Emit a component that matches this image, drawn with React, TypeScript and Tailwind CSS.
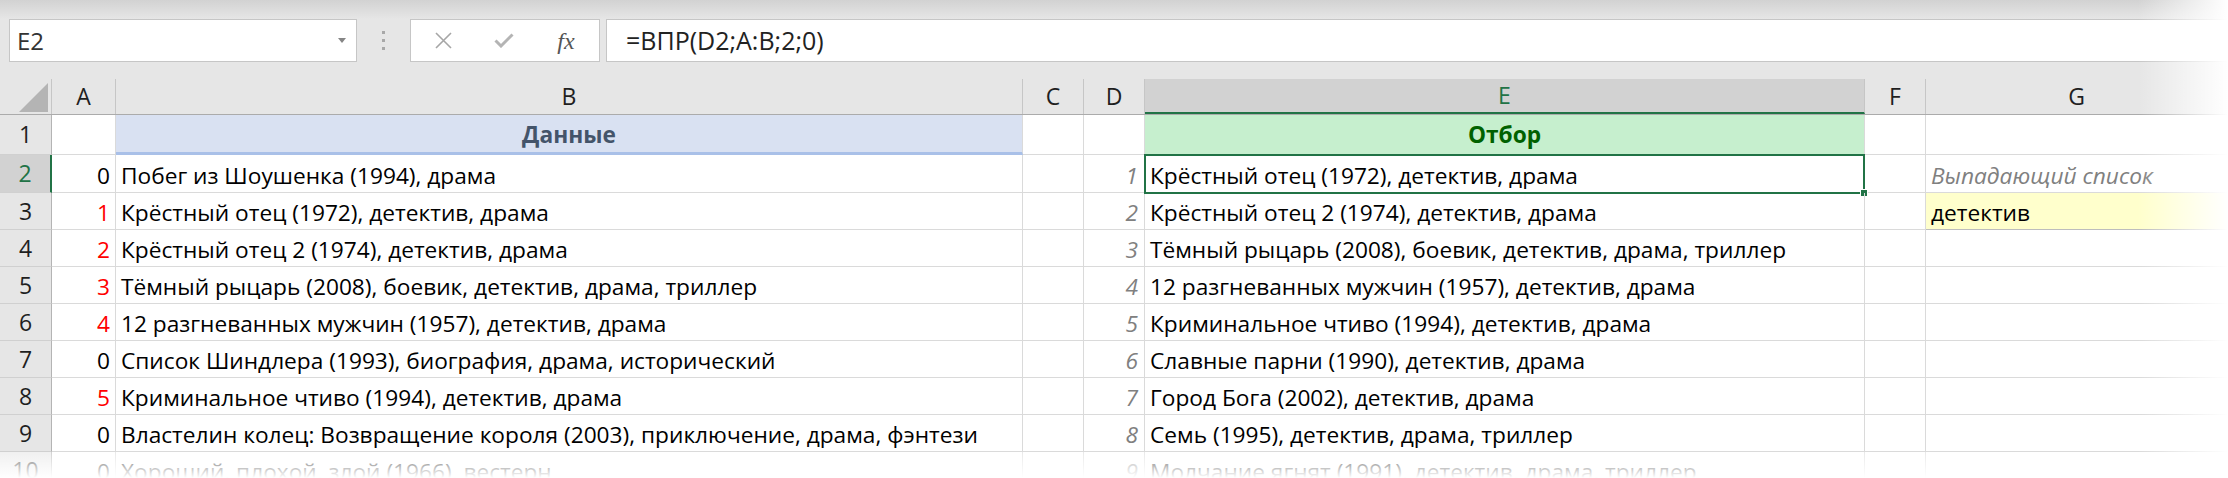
import React from 'react';

type Row = { n: number; a: number; b: string; d: number; e: string; h: string };

const rows: Row[] = [
  { n: 2, a: 0, b: 'Побег из Шоушенка (1994), драма', d: 1, e: 'Крёстный отец (1972), детектив, драма', h: 'h-[38px]' },
  { n: 3, a: 1, b: 'Крёстный отец (1972), детектив, драма', d: 2, e: 'Крёстный отец 2 (1974), детектив, драма', h: 'h-[37px]' },
  { n: 4, a: 2, b: 'Крёстный отец 2 (1974), детектив, драма', d: 3, e: 'Тёмный рыцарь (2008), боевик, детектив, драма, триллер', h: 'h-[37px]' },
  { n: 5, a: 3, b: 'Тёмный рыцарь (2008), боевик, детектив, драма, триллер', d: 4, e: '12 разгневанных мужчин (1957), детектив, драма', h: 'h-[37px]' },
  { n: 6, a: 4, b: '12 разгневанных мужчин (1957), детектив, драма', d: 5, e: 'Криминальное чтиво (1994), детектив, драма', h: 'h-[37px]' },
  { n: 7, a: 0, b: 'Список Шиндлера (1993), биография, драма, исторический', d: 6, e: 'Славные парни (1990), детектив, драма', h: 'h-[37px]' },
  { n: 8, a: 5, b: 'Криминальное чтиво (1994), детектив, драма', d: 7, e: 'Город Бога (2002), детектив, драма', h: 'h-[37px]' },
  { n: 9, a: 0, b: 'Властелин колец: Возвращение короля (2003), приключение, драма, фэнтези', d: 8, e: 'Семь (1995), детектив, драма, триллер', h: 'h-[37px]' },
  { n: 10, a: 0, b: 'Хороший, плохой, злой (1966), вестерн', d: 9, e: 'Молчание ягнят (1991), детектив, драма, триллер', h: 'h-[37px]' },
];

// cell text sits on the bottom like excel does
const cell = 'shrink-0 h-full border-r border-b border-[#dadada] flex items-end whitespace-nowrap pb-[1px] leading-[30px]';
const hdr = 'shrink-0 h-full border-r border-[#c6c6c6] flex items-center justify-center';

const App: React.FC = () => {
  return (
    <div className="relative w-[2228px] h-[478px] overflow-hidden bg-white font-['Open_Sans','Noto_Sans',sans-serif] text-[22.7px] text-black">
      {/* ribbon shadow */}
      <div className="h-[19px] bg-linear-to-b from-[#d2d2d2] to-[#e6e6e6]" />

      {/* Formula bar */}
      <div className="h-[43px] bg-[#e6e6e6] flex items-stretch">
        <div className="ml-[9px] w-[348px] bg-white border border-[#c6c6c6] flex items-center justify-between pl-[7px] pr-[10px]">
          <span className="text-[24px] text-[#333] leading-none">E2</span>
          <svg width="8" height="5" viewBox="0 0 8 5">
            <polygon points="0,0 8,0 4,5" fill="#858585" />
          </svg>
        </div>
        <div className="w-[53px] flex flex-col items-center justify-center gap-[5px]">
          <span className="w-[3px] h-[3px] bg-[#a8a8a8]" />
          <span className="w-[3px] h-[3px] bg-[#a8a8a8]" />
          <span className="w-[3px] h-[3px] bg-[#a8a8a8]" />
        </div>
        <div className="w-[190px] bg-white border border-[#c6c6c6] flex items-center">
          <div className="w-[62px] flex justify-center pl-[2px]">
            <svg width="17" height="17" viewBox="0 0 17 17">
              <path d="M1 1 L16 16 M16 1 L1 16" stroke="#a6a6a6" strokeWidth="1.6" fill="none" />
            </svg>
          </div>
          <div className="w-[62px] flex justify-center">
            <svg width="20" height="15" viewBox="0 0 20 15">
              <path d="M1.5 7.5 L7 13 L18.5 1.5" stroke="#b4b4b4" strokeWidth="3" fill="none" />
            </svg>
          </div>
          <div className="w-[62px] flex justify-center">
            <span className="font-['Liberation_Serif',serif] italic text-[24px] text-[#555] leading-none">fx</span>
          </div>
        </div>
        <div className="ml-[6px] flex-1 bg-white border border-[#c6c6c6] flex items-center pl-[19px]">
          <span className="text-[25px] text-[#222] leading-none">=ВПР(D2;A:B;2;0)</span>
        </div>
      </div>

      <div className="h-[17px] bg-[#e6e6e6]" />

      {/* Column headers */}
      <div className="h-[36px] bg-[#e6e6e6] flex border-b border-[#ababab] text-[23px] text-[#1f1f1f]">
        <div className="w-[52px] shrink-0 h-full border-r border-[#c6c6c6] flex items-end justify-end pr-[3px] pb-[2px]">
          <svg width="29" height="29" viewBox="0 0 29 29">
            <polygon points="29,0 29,29 0,29" fill="#b4b4b4" />
          </svg>
        </div>
        <div className={`${hdr} w-[64px]`}>A</div>
        <div className={`${hdr} w-[907px]`}>B</div>
        <div className={`${hdr} w-[61px]`}>C</div>
        <div className={`${hdr} w-[61px]`}>D</div>
        <div className={`${hdr} w-[720px] bg-[#d2d2d2] text-[#217346] border-b-2 border-b-[#217346]`}>E</div>
        <div className={`${hdr} w-[61px]`}>F</div>
        <div className={`${hdr} flex-1`}>G</div>
      </div>

      {/* Row 1 */}
      <div className="h-[40px] flex">
        <div className="w-[52px] shrink-0 h-full bg-[#e6e6e6] border-r border-b border-r-[#b4b4b4] border-b-[#d0d0d0] flex items-center justify-center text-[23px] text-[#1f1f1f]">1</div>
        <div className={`${cell} w-[64px]`} />
        <div className={`${cell} w-[907px] bg-[#d9e1f2] border-b-[3px] border-b-[#a9c0e8] justify-center font-bold text-[#44546a] pb-[2px]`}>Данные</div>
        <div className={`${cell} w-[61px]`} />
        <div className={`${cell} w-[61px]`} />
        <div className={`${cell} w-[720px] bg-[#c6efce] justify-center font-bold text-[#006100] pb-[4px]`}>Отбор</div>
        <div className={`${cell} w-[61px]`} />
        <div className={`${cell} flex-1`} />
      </div>

      {rows.map((r) => {
        const sel = r.n === 2;
        return (
          <div key={r.n} className={`${r.h} flex`}>
            <div
              className={`w-[52px] shrink-0 h-full border-b border-b-[#d0d0d0] flex items-center justify-center text-[23px] ${
                sel ? 'bg-[#d2d2d2] text-[#217346] border-r-2 border-r-[#217346]' : 'bg-[#e6e6e6] text-[#1f1f1f] border-r border-r-[#b4b4b4]'
              }`}
            >
              {r.n}
            </div>
            <div className={`${cell} w-[64px] justify-end pr-[5px] ${r.a > 0 ? 'text-[#ff0000]' : ''}`}>{r.a}</div>
            <div className={`${cell} w-[907px] pl-[5px]`}>{r.b}</div>
            <div className={`${cell} w-[61px]`} />
            <div className={`${cell} w-[61px] justify-end pr-[6px] italic text-[#808080]`}>{r.d}</div>
            <div className={`${cell} relative w-[720px] pl-[5px]`}>
              {r.e}
              {sel && (
                <div className="absolute left-[-1px] top-[-1px] right-[-1px] bottom-[-2px] border-2 border-[#217346] pointer-events-none">
                  <div className="absolute right-[-5px] bottom-[-5px] w-[8px] h-[8px] bg-[#217346] border border-white" />
                </div>
              )}
            </div>
            <div className={`${cell} w-[61px]`} />
            {r.n === 2 ? (
              <div className={`${cell} flex-1 pl-[5px] italic text-[#808080]`}>Выпадающий список</div>
            ) : r.n === 3 ? (
              <div className={`${cell} flex-1 pl-[5px] bg-[#ffffcc] border-b-[#bdbdbd]`}>детектив</div>
            ) : (
              <div className={`${cell} flex-1`} />
            )}
          </div>
        );
      })}

      {/* edges of the screenshot fade out */}
      <div className="absolute top-0 right-0 w-[90px] h-full bg-linear-to-r from-white/0 to-white pointer-events-none" />
      <div className="absolute left-0 bottom-0 w-full h-[26px] bg-linear-to-b from-white/40 to-white pointer-events-none" />
    </div>
  );
};

export default App;
